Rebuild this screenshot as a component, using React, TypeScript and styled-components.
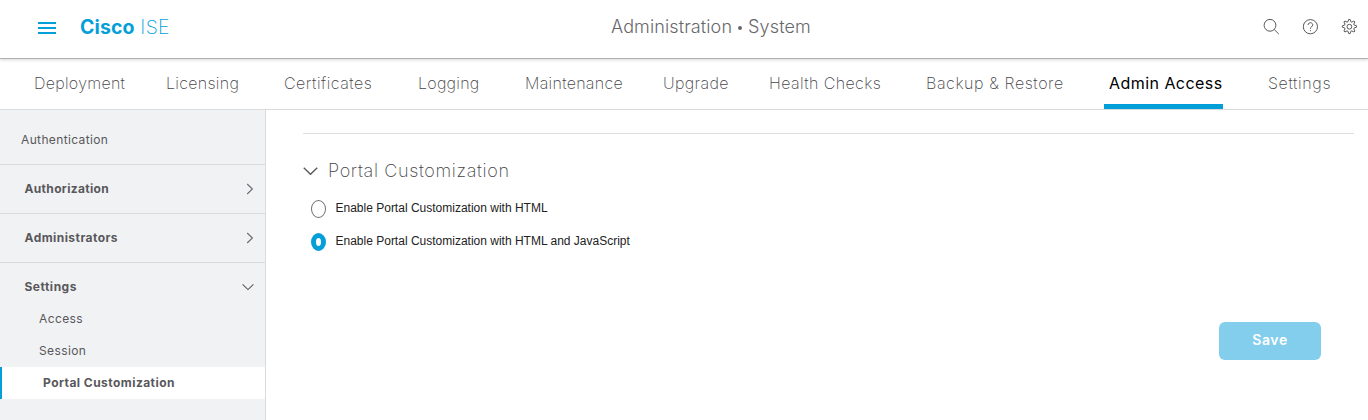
import React from 'react';
import styled, { createGlobalStyle, css } from 'styled-components';

const GlobalStyle = createGlobalStyle`
  * { box-sizing: border-box; }
  body { margin: 0; background: #fff; font-family: Inter, "Liberation Sans", sans-serif; }
`;

const Page = styled.div`
  width: 1368px;
  height: 420px;
  overflow: hidden;
  display: flex;
  flex-direction: column;
  background: #fff;
`;

const Header = styled.header`
  height: 59px;
  flex: none;
  display: grid;
  grid-template-columns: 573px auto 1fr;
  align-items: center;
  padding: 0 11px 4px 38px;
  border-bottom: 1px solid #b2b2b2;
  box-shadow: 0 1px 3px rgba(0, 0, 0, 0.16);
  z-index: 1;
`;

const Brand = styled.div`
  display: flex;
  align-items: center;
  color: #049fd9;
`;

const MenuButton = styled.div`
  width: 18px;
  height: 12px;
  margin: 1px 24px 0 0;
  display: flex;
  flex-direction: column;
  justify-content: space-between;
`;

const MenuBar = styled.span`
  height: 2px;
  background: #049fd9;
`;

const BrandName = styled.span<{ $light?: boolean }>`
  font-size: 19.5px;
  line-height: 24px;
  white-space: pre;
  font-weight: ${(p) => (p.$light ? 200 : 700)};
  letter-spacing: ${(p) => (p.$light ? '0.3px' : '0.1px')};
`;

const Title = styled.h1`
  margin: 0;
  display: flex;
  align-items: center;
  font-size: 18px;
  line-height: 24px;
  font-weight: 300;
  letter-spacing: 0.12px;
  color: #68686b;
`;

const TitleDot = styled.span`
  width: 4px;
  height: 4px;
  margin: 2px 6px 0;
  border-radius: 50%;
  background: #68686b;
`;

const Tools = styled.div`
  display: flex;
  justify-content: flex-end;
  gap: 23px;
  svg { display: block; }
`;

const Tabs = styled.nav`
  height: 51px;
  flex: none;
  display: grid;
  grid-template-columns: 132px 118px 134px 107px 138px 106px 157px 178px 164px 70px;
  padding-left: 34px;
  border-bottom: 1px solid #d9dbdd;
`;

const Tab = styled.a<{ $active?: boolean; $spacing: number }>`
  justify-self: start;
  white-space: nowrap;
  font-size: 16px;
  line-height: 20px;
  padding-top: 14px;
  font-weight: 200;
  letter-spacing: ${(p) => p.$spacing}px;
  color: #444447;
  ${(p) =>
    p.$active &&
    css`
      width: 119px;
      padding-left: 5px;
      font-weight: 400;
      color: #000;
      border-bottom: 5px solid #049fd9;
    `}
`;

const Body = styled.div`
  flex: 1;
  display: flex;
  min-height: 0;
`;

const Sidebar = styled.aside`
  width: 266px;
  flex: none;
  background: #f1f2f4;
  border-right: 1px solid #d9dbdd;
`;

const NavRow = styled.div<{ $first?: boolean; $last?: boolean }>`
  height: ${(p) => (p.$first ? 55 : p.$last ? 40 : 49)}px;
  padding: ${(p) => (p.$first ? '21px 11px 0 21px' : '15px 11px 0 24.5px')};
  display: flex;
  align-items: flex-start;
  justify-content: space-between;
  border-bottom: ${(p) => (p.$last ? '0' : '1px solid #d9dbdd')};
`;

const NavLabel = styled.span<{ $bold?: boolean; $spacing?: number }>`
  font-size: 12px;
  line-height: 18px;
  white-space: nowrap;
  font-weight: ${(p) => (p.$bold ? 700 : 400)};
  letter-spacing: ${(p) => p.$spacing ?? 0.4}px;
  color: #58585b;
`;

const SubItem = styled.div<{ $active?: boolean }>`
  height: 32px;
  display: flex;
  align-items: center;
  padding-left: 39px;
  ${(p) =>
    p.$active &&
    css`
      padding-left: 41px;
      background: #fff;
      border-left: 2px solid #049fd9;
    `}
`;

const Main = styled.main`
  flex: 1;
  display: flex;
  flex-direction: column;
  padding: 23px 14px 0 37px;
`;

const Rule = styled.hr`
  width: 100%;
  height: 1px;
  margin: 0;
  border: 0;
  background: #dcdddf;
`;

const SectionHeader = styled.div`
  display: flex;
  align-items: center;
  gap: 10px;
  margin: 25px 0 0;
  height: 24px;
`;

const SectionTitle = styled.h2`
  margin: 0;
  font-size: 18px;
  line-height: 24px;
  font-weight: 200;
  letter-spacing: 0.65px;
  color: #444447;
`;

const Options = styled.div`
  display: flex;
  flex-direction: column;
  gap: 15px;
  margin: 16px 0 0 8px;
`;

const Option = styled.label`
  display: flex;
  gap: 9.5px;
  height: 18px;
  font-family: "Liberation Sans", Arial, sans-serif;
  font-size: 12px;
  line-height: 19px;
  color: #222;
`;

const Radio = styled.span<{ $checked?: boolean }>`
  width: 15px;
  height: 18px;
  margin-top: 1px;
  flex: none;
  border-radius: 50%;
  background: #fff;
  border: ${(p) => (p.$checked ? '5px solid #049fd9' : '1px solid #6f6f72')};
`;

const SaveButton = styled.button`
  align-self: flex-end;
  width: 102px;
  height: 38px;
  margin: 72px 33px 0 0;
  padding: 0 0 3px;
  border: 0;
  border-radius: 6px;
  background: #82ceec;
  color: #fff;
  font-family: inherit;
  font-size: 14px;
  font-weight: 600;
  letter-spacing: 0.6px;
`;

const tabs = [
  { label: 'Deployment', spacing: 0.28 },
  { label: 'Licensing', spacing: 0.3 },
  { label: 'Certificates', spacing: 0.52 },
  { label: 'Logging', spacing: 0.25 },
  { label: 'Maintenance', spacing: 0.3 },
  { label: 'Upgrade', spacing: 0.35 },
  { label: 'Health Checks', spacing: 0.4 },
  { label: 'Backup & Restore', spacing: 0.58 },
  { label: 'Admin Access', spacing: 0.45, active: true },
  { label: 'Settings', spacing: 0.65 },
];

const ChevronRight = () => (
  <svg width="8" height="12" viewBox="0 0 8 12" fill="none" stroke="#6a6b6e" strokeWidth="1.1">
    <path d="M1.2 1 6.4 6 1.2 11" />
  </svg>
);

const ChevronDown = ({ width = 12, height = 8 }: { width?: number; height?: number }) => (
  <svg width={width} height={height} viewBox="0 0 12 8" fill="none" stroke="#58585b" strokeWidth="1.05">
    <path d="M.6 1.4 6 6.6 11.4 1.4" />
  </svg>
);

const ChevronBox = styled.span`
  height: 18px;
  display: flex;
  align-items: center;
`;

const SearchIcon = () => (
  <svg width="16" height="16" viewBox="0 0 16 16" fill="none" stroke="#58585b" strokeWidth="1">
    <circle cx="7" cy="6.3" r="5.9" />
    <path d="M11.2 10.5 15.8 15" />
  </svg>
);

const HelpIcon = () => (
  <svg width="16" height="16" viewBox="0 0 16 16" fill="none" stroke="#58585b" strokeWidth="1">
    <circle cx="8.400" cy="7.7" r="7.1" />
    <path d="M6.1 6a2.3 2.2 0 1 1 3.6 1.7C8.8 8.3 8.400 8.7 8.400 9.8" />
    <path d="M8.400 11.1v1.1" />
  </svg>
);

const GearIcon = () => (
  <svg width="17" height="16" viewBox="-.4 0 17 16" fill="none" stroke="#58585b" strokeWidth="1" strokeLinejoin="round">
    <circle cx="8" cy="7.7" r="2.4" />
    <path d="M7.3.4h1.4l.7 2.3 1 .4 2.1-1.1 1 1-1.1 2.1.4 1 2.3.7v1.4l-2.3.7-.4 1 1.1 2.1-1 1-2.1-1.1-1 .4-.7 2.3H7.3l-.7-2.3-1-.4-2.1 1.1-1-1 1.1-2.1-.4-1L.9 8.2V6.8l2.300-.7.4-1L2.5 3l1-1 2.1 1.1 1-.4z" />
  </svg>
);

const GearSlot = styled.span`
  width: 16px;
`;

export default function App() {
  return (
    <>
      <GlobalStyle />
      <Page>
        <Header>
          <Brand>
            <MenuButton>
              <MenuBar />
              <MenuBar />
              <MenuBar />
            </MenuButton>
            <BrandName>Cisco</BrandName>
            <BrandName $light> ISE</BrandName>
          </Brand>
          <Title>
            Administration
            <TitleDot />
            System
          </Title>
          <Tools>
            <SearchIcon />
            <HelpIcon />
            <GearSlot>
              <GearIcon />
            </GearSlot>
          </Tools>
        </Header>
        <Tabs>
          {tabs.map((t) => (
            <Tab key={t.label} $active={t.active} $spacing={t.spacing}>
              {t.label}
            </Tab>
          ))}
        </Tabs>
        <Body>
          <Sidebar>
            <NavRow $first>
              <NavLabel $spacing={0.36}>Authentication</NavLabel>
            </NavRow>
            <NavRow>
              <NavLabel $bold $spacing={0.33}>Authorization</NavLabel>
              <ChevronBox>
                <ChevronRight />
              </ChevronBox>
            </NavRow>
            <NavRow>
              <NavLabel $bold $spacing={0.45}>Administrators</NavLabel>
              <ChevronBox>
                <ChevronRight />
              </ChevronBox>
            </NavRow>
            <NavRow $last>
              <NavLabel $bold $spacing={0.5}>Settings</NavLabel>
              <ChevronBox>
                <ChevronDown />
              </ChevronBox>
            </NavRow>
            <SubItem>
              <NavLabel>Access</NavLabel>
            </SubItem>
            <SubItem>
              <NavLabel>Session</NavLabel>
            </SubItem>
            <SubItem $active>
              <NavLabel $bold $spacing={0.45}>Portal Customization</NavLabel>
            </SubItem>
          </Sidebar>
          <Main>
            <Rule />
            <SectionHeader>
              <ChevronDown width={15} height={10} />
              <SectionTitle>Portal Customization</SectionTitle>
            </SectionHeader>
            <Options>
              <Option>
                <Radio />
                Enable Portal Customization with HTML
              </Option>
              <Option>
                <Radio $checked />
                Enable Portal Customization with HTML and JavaScript
              </Option>
            </Options>
            <SaveButton>Save</SaveButton>
          </Main>
        </Body>
      </Page>
    </>
  );
}
